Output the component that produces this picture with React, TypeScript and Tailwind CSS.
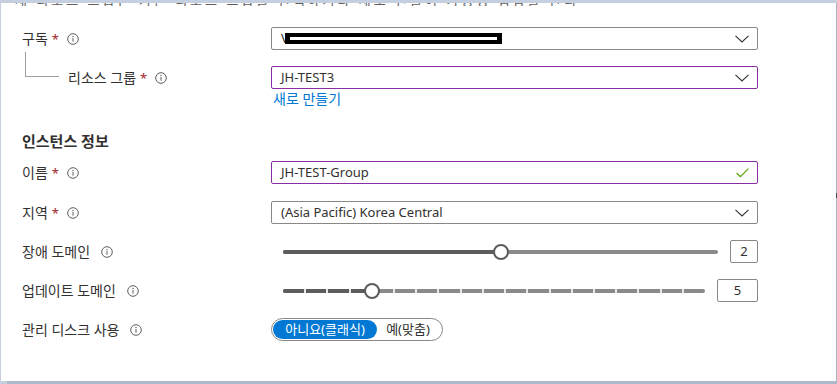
import { ReactNode } from "react";

const FONT = { fontFamily: '"Noto Sans", "Noto Sans CJK KR", sans-serif' };

function Info() {
  return (
    <svg width="12" height="12" viewBox="0 0 12 12" className="shrink-0">
      <circle cx="6" cy="6" r="5.3" fill="none" stroke="#605e5c" strokeWidth="1" />
      <rect x="5.5" y="5" width="1" height="3.6" fill="#605e5c" />
      <circle cx="6" cy="3.5" r="0.65" fill="#605e5c" />
    </svg>
  );
}

function Chevron() {
  return (
    <svg width="14" height="8" viewBox="0 0 14 8" className="shrink-0">
      <path d="M0.5 0.8 L7 7 L13.5 0.8" fill="none" stroke="#323130" strokeWidth="1.1" />
    </svg>
  );
}

function Check() {
  return (
    <svg width="13" height="10" viewBox="0 0 13 10" className="shrink-0">
      <path d="M0.6 5 L4.4 8.7 L12.4 0.7" fill="none" stroke="#57a300" strokeWidth="1.2" />
    </svg>
  );
}

function Label({ text, req, gap = "gap-[8px]" }: { text: string; req?: boolean; gap?: string }) {
  return (
    <div className={`flex items-center ${gap} text-[14px] leading-[20px] text-[#323130]`}>
      <span>
        {text}
        {req && <span className="text-[#a4262c] ml-[4px] text-[13px]">*</span>}
      </span>
      <Info />
    </div>
  );
}

function Row({ label, children, mt }: { label: ReactNode; children: ReactNode; mt: string }) {
  return (
    <div className={`flex items-center ${mt}`}>
      <div className="w-[249px] shrink-0">{label}</div>
      <div className="w-[487px] shrink-0">{children}</div>
    </div>
  );
}

function Field({ children, purple, right }: { children: ReactNode; purple?: boolean; right: ReactNode }) {
  return (
    <div
      className={`h-[23px] flex items-center justify-between pl-[9px] pr-[8px] rounded-[2px] border text-[13px] text-[#323130] ${
        purple ? "border-[#8a2da5]" : "border-[#8a8886]"
      }`}
    >
      <div className="flex items-center">{children}</div>
      {right}
    </div>
  );
}

function Slider({ steps, value, box }: { steps: number; value: number; box: number }) {
  const frac = (value - 1) / (steps - 1);
  return (
    <div className="flex items-center">
      <div className="flex-1 px-[12px]">
        <div className="relative h-[4px]">
          <div className="absolute inset-0 rounded-full bg-[#8a8a8a]" />
          <div className="absolute left-0 top-0 h-[4px] rounded-full bg-[#5c5c5c]" style={{ width: `${frac * 100}%` }} />
          {steps > 3 &&
            Array.from({ length: steps - 2 }).map((_, i) => (
              <div
                key={i}
                className="absolute top-0 h-[4px] w-[2px] bg-[#e6e6e6]"
                style={{ left: `calc(${((i + 1) / (steps - 1)) * 100}% - 1px)` }}
              />
            ))}
          <div
            className="absolute top-[-6px] h-[16px] w-[16px] rounded-full bg-white border-2 border-[#5c5c5c]"
            style={{ left: `calc(${frac * 100}% - 8px)` }}
          />
        </div>
      </div>
      <div
        className={`h-[23px] flex items-center justify-center border border-[#8a8886] rounded-[2px] text-[13px] text-[#323130] ${
          box === 2 ? "w-[28px]" : "w-[41px]"
        }`}
      >
        {box}
      </div>
    </div>
  );
}

export default function App() {
  return (
    <div className="w-[837px] h-[384px] bg-[#c5cfe0] overflow-hidden" style={FONT}>
      <div className="ml-[1px] mt-[3px] w-[835px] h-[378px] bg-white relative">
        <div className="h-[3px] overflow-hidden">
          <div className="-mt-[12px] pl-[14px] text-[13px] text-[#605e5c] tracking-[3px] whitespace-nowrap">
            새 리소스 그룹은 기존 리소스 그룹을 선택하거나 새로 만들어 가용성 집합을 관리
          </div>
        </div>

        <div className="pl-[21px]">
          <Row mt="mt-[21px]" label={<Label text="구독" req />}>
            <Field right={<Chevron />}>
              <span className="text-[#323130]">V</span>
              <div className="ml-[-4px] h-[11px] w-[217px] bg-black flex items-center px-[5px]">
                <div className="h-[3px] w-full bg-white" />
              </div>
            </Field>
          </Row>

          <Row
            mt="mt-[16px]"
            label={
              <div className="flex items-center">
                <div className="ml-[3px] mr-[9px] -mt-[26px] w-[34px] h-[25px] border-l border-b border-[#a0a0a0]" />
                <Label text="리소스 그룹" req />
              </div>
            }
          >
            <Field purple right={<Chevron />}>
              JH-TEST3
            </Field>
          </Row>

          <div className="flex mt-[1px]">
            <div className="w-[251px]" />
            <div className="text-[14px] leading-[18px] text-[#0078d4]">새로 만들기</div>
          </div>

          <div className="mt-[23px] text-[15px] leading-[20px] font-semibold text-[#323130]">인스턴스 정보</div>

          <Row mt="mt-[10px]" label={<Label text="이름" req />}>
            <Field purple right={<Check />}>
              JH-TEST-Group
            </Field>
          </Row>

          <Row mt="mt-[17px]" label={<Label text="지역" req />}>
            <Field right={<Chevron />}>(Asia Pacific) Korea Central</Field>
          </Row>

          <Row mt="mt-[16px]" label={<Label text="장애 도메인" gap="gap-[11px]" />}>
            <Slider steps={3} value={2} box={2} />
          </Row>

          <Row mt="mt-[16px]" label={<Label text="업데이트 도메인" gap="gap-[11px]" />}>
            <Slider steps={20} value={5} box={5} />
          </Row>

          <Row mt="mt-[16px]" label={<Label text="관리 디스크 사용" gap="gap-[11px]" />}>
            <div className="w-[172px] h-[23px] rounded-full border border-[#8a8886] flex items-center px-[1px] text-[13px]">
              <div className="h-[19px] w-[104px] rounded-full bg-[#0078d4] text-white flex items-center justify-center">
                아니요(클래식)
              </div>
              <div className="flex-1 text-center text-[#323130] pr-[2px]">예(맞춤)</div>
            </div>
          </Row>
        </div>

        <div className="absolute right-[-1px] top-0 bottom-0 w-[1px] bg-[#a9b3c4]" />
        <div className="absolute right-[-1px] top-[190px] w-[1px] h-[5px] bg-[#4a4a4a]" />
      </div>
      <div className="h-[3px] ml-[7px] bg-[#adb8ca]" />
    </div>
  );
}
